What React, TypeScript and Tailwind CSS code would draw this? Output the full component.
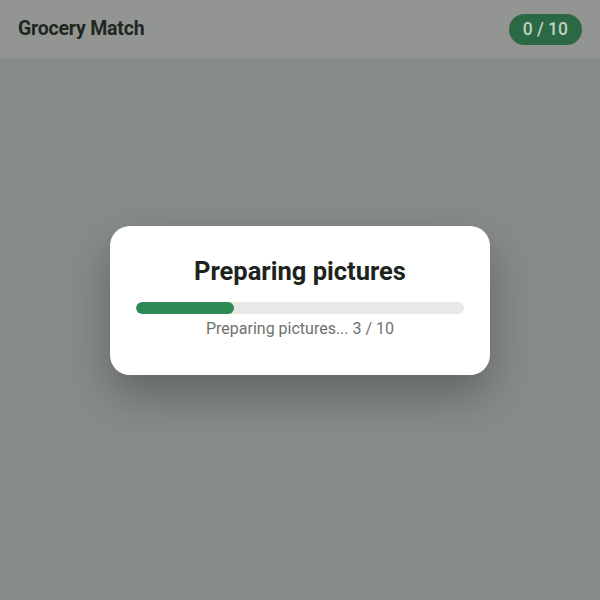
import React from 'react'

export default function App() {
  const done = 3
  const total = 10
  return (
    <div className="w-[600px] h-[600px] flex flex-col font-['Roboto',sans-serif] overflow-hidden">
      <header className="h-[59px] shrink-0 bg-[#929592] border-b border-[#8a8e8b] flex items-center justify-between px-[18px]">
        <h1 className="text-[19.5px] font-bold text-[#1e2721] tracking-[-0.2px]">Grocery Match</h1>
        <span className="h-[31px] px-[14px] rounded-full bg-[#2b6944] text-[#c0cec4] text-[17.5px] font-medium flex items-center">
          0 / 10
        </span>
      </header>
      <main className="flex-1 bg-[#878c88] flex items-center justify-center pb-[58px]">
        <div className="w-[380px] h-[149px] rounded-[20px] bg-white shadow-[0_20px_45px_rgba(0,0,0,0.28)] px-[26px] pt-[30px] flex flex-col items-center">
          <h2 className="text-[25.5px] leading-[30px] font-bold text-[#1d2420]">Preparing pictures</h2>
          <div className="mt-4 w-full h-3 rounded-full bg-[#e7e9e7] overflow-hidden">
            <div className="h-full rounded-full bg-[#2e8a55]" style={{ width: `${(done / total) * 100}%` }} />
          </div>
          <p className="mt-[5px] text-[16px] leading-5 text-[#6d716e]">
            Preparing pictures... {done} / {total}
          </p>
        </div>
      </main>
    </div>
  )
}
